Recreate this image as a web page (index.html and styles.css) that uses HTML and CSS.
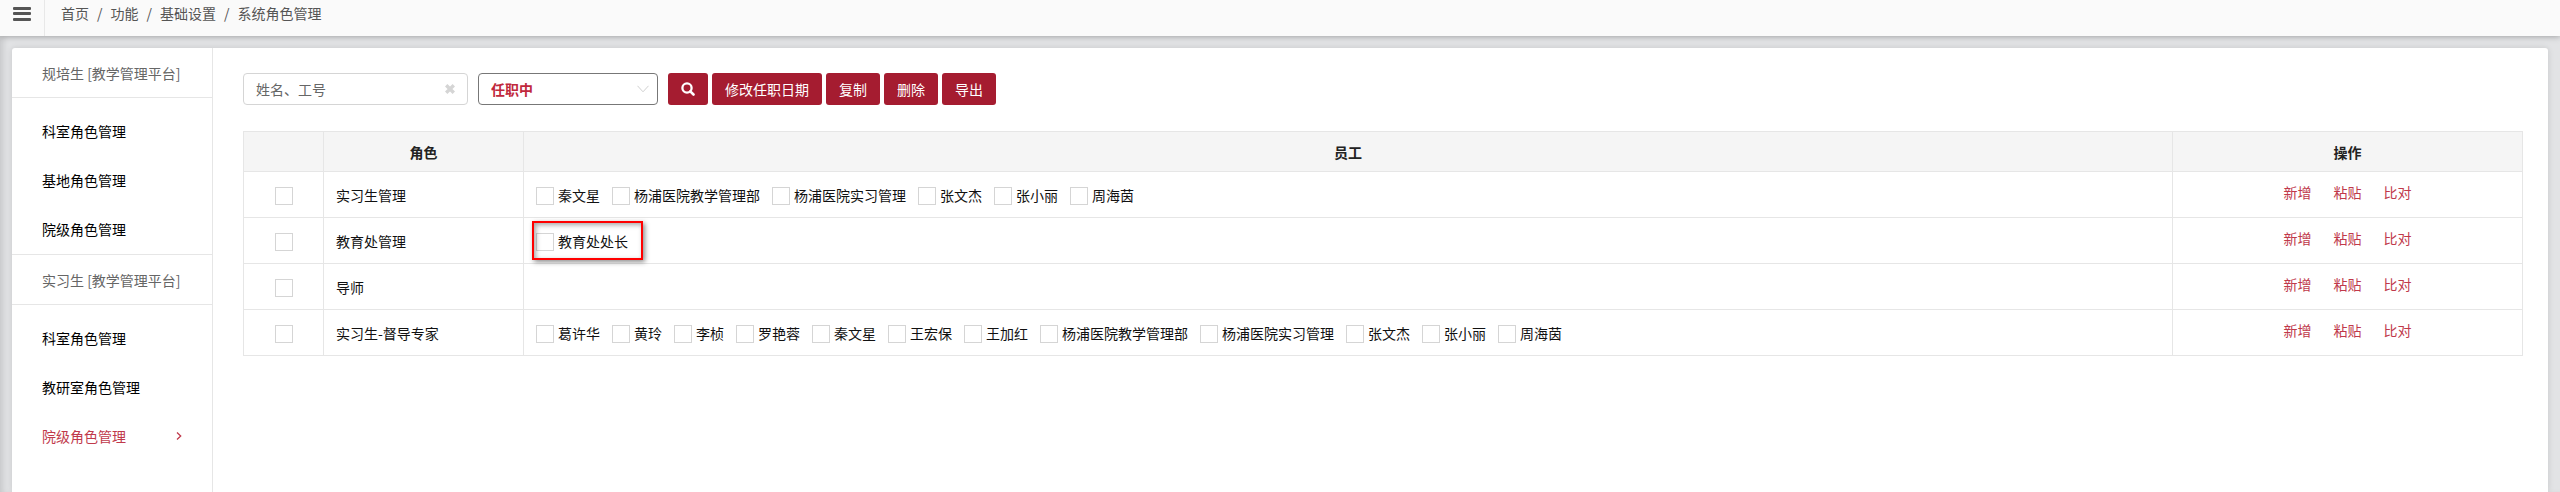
FILE: index.html
```
<!DOCTYPE html>
<html lang="zh-CN">
<head>
    <meta charset="UTF-8">
    <meta name="viewport" content="width=device-width, initial-scale=1.0">
    <title>系统角色管理</title>
    <link rel="stylesheet" href="styles.css">
</head>
<body>
    <header class="topbar">
        <button class="menu-button" type="button" aria-label="菜单">
            <svg class="menu-icon" width="18" height="16" viewBox="0 0 18 16" fill="#555">
                <rect x="0" y="1" width="18" height="3" rx="1"/>
                <rect x="0" y="6" width="18" height="3" rx="1"/>
                <rect x="0" y="12" width="18" height="3" rx="1"/>
            </svg>
        </button>
        <nav class="breadcrumb">
            <a href="#">首页</a><span>/</span><a href="#">功能</a><span>/</span><a href="#">基础设置</a><span>/</span><a href="#">系统角色管理</a>
        </nav>
    </header>

    <div class="page">
        <div class="panel">
            <aside class="sidebar">
                <div class="side-title">规培生 [教学管理平台]</div>
                <nav class="side-list">
                    <a class="side-item" href="#">科室角色管理</a>
                    <a class="side-item" href="#">基地角色管理</a>
                    <a class="side-item" href="#">院级角色管理</a>
                </nav>
                <div class="side-title">实习生 [教学管理平台]</div>
                <nav class="side-list">
                    <a class="side-item" href="#">科室角色管理</a>
                    <a class="side-item" href="#">教研室角色管理</a>
                    <a class="side-item active" href="#">院级角色管理
                        <svg width="6" height="10" viewBox="0 0 6 10" fill="none" stroke="#c0394b" stroke-width="1.3"><path d="M1 1.5 4.7 5 1 8.5"/></svg>
                    </a>
                </nav>
            </aside>

            <main class="content">
                <form class="toolbar">
                    <div class="search-box">
                        <input class="search-input" type="text" placeholder="姓名、工号" aria-label="姓名、工号">
                        <button class="clear-button" type="button" aria-label="清除">
                            <svg width="10" height="10" viewBox="0 0 10 10" stroke="#d5d5d5" stroke-width="3.4"><path d="M1.2 1.2 8.8 8.8M8.8 1.2 1.2 8.8"/></svg>
                        </button>
                    </div>
                    <div class="select-box">
                        <select class="status-select" aria-label="任职状态">
                            <option>任职中</option>
                        </select>
                        <svg class="select-arrow" width="12" height="8" viewBox="0 0 12 8" fill="none" stroke="#d0d0d0"><path d="M.5 .8 6 6.8 11.500 .8"/></svg>
                    </div>
                    <div class="buttons">
                        <button class="btn btn-search" type="button" aria-label="搜索">
                            <svg width="14" height="14" viewBox="0 0 14 14" fill="none" stroke="#fff"><circle cx="6" cy="6" r="4.600" stroke-width="2.300"/><path d="m9.300 9.300 3.200 3.200" stroke-width="2.600" stroke-linecap="round"/></svg>
                        </button>
                        <button class="btn" type="button">修改任职日期</button>
                        <button class="btn" type="button">复制</button>
                        <button class="btn" type="button">删除</button>
                        <button class="btn" type="button">导出</button>
                    </div>
                </form>

                <table class="role-table">
                    <thead>
                        <tr>
                            <th class="col-check"></th>
                            <th class="col-role">角色</th>
                            <th>员工</th>
                            <th class="col-action">操作</th>
                        </tr>
                    </thead>
                    <tbody>
                        <tr>
                            <td class="check-cell"><input type="checkbox" aria-label="实习生管理"></td>
                            <td>实习生管理</td>
                            <td>
                                <div class="staff-list">
                                    <label class="staff"><input type="checkbox">秦文星</label>
                                    <label class="staff"><input type="checkbox">杨浦医院教学管理部</label>
                                    <label class="staff"><input type="checkbox">杨浦医院实习管理</label>
                                    <label class="staff"><input type="checkbox">张文杰</label>
                                    <label class="staff"><input type="checkbox">张小丽</label>
                                    <label class="staff"><input type="checkbox">周海茵</label>
                                </div>
                            </td>
                            <td class="action-cell"><div class="actions"><a href="#">新增</a><a href="#">粘贴</a><a href="#">比对</a></div></td>
                        </tr>
                        <tr>
                            <td class="check-cell"><input type="checkbox" aria-label="教育处管理"></td>
                            <td>教育处管理</td>
                            <td>
                                <div class="staff-list">
                                    <label class="staff marked"><input type="checkbox">教育处处长</label>
                                </div>
                            </td>
                            <td class="action-cell"><div class="actions"><a href="#">新增</a><a href="#">粘贴</a><a href="#">比对</a></div></td>
                        </tr>
                        <tr>
                            <td class="check-cell"><input type="checkbox" aria-label="导师"></td>
                            <td>导师</td>
                            <td></td>
                            <td class="action-cell"><div class="actions"><a href="#">新增</a><a href="#">粘贴</a><a href="#">比对</a></div></td>
                        </tr>
                        <tr>
                            <td class="check-cell"><input type="checkbox" aria-label="实习生-督导专家"></td>
                            <td>实习生-督导专家</td>
                            <td>
                                <div class="staff-list">
                                    <label class="staff"><input type="checkbox">葛许华</label>
                                    <label class="staff"><input type="checkbox">黄玲</label>
                                    <label class="staff"><input type="checkbox">李桢</label>
                                    <label class="staff"><input type="checkbox">罗艳蓉</label>
                                    <label class="staff"><input type="checkbox">秦文星</label>
                                    <label class="staff"><input type="checkbox">王宏保</label>
                                    <label class="staff"><input type="checkbox">王加红</label>
                                    <label class="staff"><input type="checkbox">杨浦医院教学管理部</label>
                                    <label class="staff"><input type="checkbox">杨浦医院实习管理</label>
                                    <label class="staff"><input type="checkbox">张文杰</label>
                                    <label class="staff"><input type="checkbox">张小丽</label>
                                    <label class="staff"><input type="checkbox">周海茵</label>
                                </div>
                            </td>
                            <td class="action-cell"><div class="actions"><a href="#">新增</a><a href="#">粘贴</a><a href="#">比对</a></div></td>
                        </tr>
                    </tbody>
                </table>
            </main>
        </div>
    </div>
</body>
</html>
```

FILE: styles.css
```
* {
    box-sizing: border-box;
}
body {
    margin: 0;
    min-height: 100vh;
    display: flex;
    flex-direction: column;
    background: #e2e3e5;
    color: #111;
    font: 14px/20px "Noto Sans CJK SC", sans-serif;
}
a {
    color: inherit;
    text-decoration: none;
}
button, input, select {
    font: inherit;
}

/* top bar */
.topbar {
    display: flex;
    background: #fafafa;
    box-shadow: 0 1px 6px rgba(0, 0, 0, 0.25);
    position: relative;
    z-index: 1;
}
.menu-button {
    width: 45px;
    height: 36px;
    padding: 0 0 8px;
    border: 0;
    border-right: 1px solid #e8e8e8;
    background: none;
}
.menu-icon {
    display: block;
    margin: 0 auto;
}
.breadcrumb {
    display: flex;
    gap: 8px;
    padding: 3px 16px 13px;
    color: #555;
}

/* page body */
.page {
    flex: 1;
    display: flex;
    padding: 12px 12px 0;
    box-shadow: inset 6px 0 6px -3px rgba(0, 0, 0, 0.12);
}
.panel {
    flex: 1;
    display: flex;
    background: #fff;
    border-radius: 3px 3px 0 0;
    box-shadow: 0 0 6px rgba(0, 0, 0, 0.12);
}
.sidebar {
    width: 201px;
    flex: none;
    border-right: 1px solid #e6e6e6;
}
.side-title {
    padding: 15px 30px 14px;
    border-bottom: 1px solid #e6e6e6;
    color: #666;
}
.side-list + .side-title {
    border-top: 1px solid #e6e6e6;
}
.side-list {
    padding: 8px 0 1px;
}
.side-item {
    display: flex;
    align-items: center;
    justify-content: space-between;
    height: 49px;
    padding: 0 30px;
    color: #000;
}
.side-item.active {
    color: #c0394b;
}

/* toolbar */
.content {
    flex: 1;
    min-width: 0;
    padding: 25px 25px 25px 30px;
}
.toolbar {
    display: flex;
    gap: 10px;
    margin-bottom: 26px;
}
.search-box, .select-box {
    position: relative;
}
.search-input, .status-select {
    display: block;
    height: 32px;
    padding: 0 12px;
    border: 1px solid #d5d5d5;
    border-radius: 4px;
    background: #fff;
    appearance: none;
}
.search-input {
    width: 225px;
}
.search-input::placeholder {
    color: #666;
    opacity: 1;
}
.clear-button {
    position: absolute;
    top: 6px;
    right: 8px;
    width: 20px;
    height: 20px;
    padding: 5px;
    border: 0;
    background: none;
}
.clear-button svg {
    display: block;
}
.status-select {
    width: 180px;
    border-color: #777;
    color: #c0283c;
    font-weight: 600;
}
.select-arrow {
    position: absolute;
    top: 12px;
    right: 9px;
    pointer-events: none;
}
.buttons {
    display: flex;
    gap: 4px;
}
.btn {
    height: 32px;
    padding: 0 13px;
    border: 0;
    border-radius: 3px;
    background: #a51c30;
    color: #fff;
}
.btn-search svg {
    display: block;
}

/* role table */
.role-table {
    width: 100%;
    border-collapse: collapse;
    table-layout: fixed;
}
.role-table th, .role-table td {
    border: 1px solid #e6e6e6;
}
.role-table th {
    height: 40px;
    padding: 0;
    background: #f5f5f5;
    color: #222;
    font-weight: 600;
}
.role-table td {
    height: 46px;
    padding: 1px 12px 0;
}
.role-table .check-cell {
    padding-top: 3px;
}
.col-check {
    width: 80px;
}
.col-role {
    width: 200px;
}
.col-action {
    width: 350px;
}
.role-table input {
    appearance: none;
    display: block;
    width: 18px;
    height: 18px;
    margin: 0;
    border: 1px solid #d5d5d5;
    background: #fff;
}
.check-cell input {
    margin: 0 auto;
}
.staff-list {
    display: flex;
    flex-wrap: wrap;
    gap: 0 12px;
}
.staff {
    display: flex;
    align-items: flex-end;
    gap: 4px;
}
.role-table .action-cell {
    padding: 0 12px 6px;
}
.actions {
    display: flex;
    justify-content: center;
    gap: 22px;
    color: #c0394b;
}

/* red frame drawn over the highlighted person */
.marked {
    position: relative;
}
.marked::after {
    content: "";
    position: absolute;
    inset: -10px -15px -9px -4px;
    border: 2px solid #f00;
    box-shadow: 2px 2px 5px rgba(0, 0, 0, 0.45), inset 2px 2px 5px rgba(0, 0, 0, 0.35);
    pointer-events: none;
}
```
